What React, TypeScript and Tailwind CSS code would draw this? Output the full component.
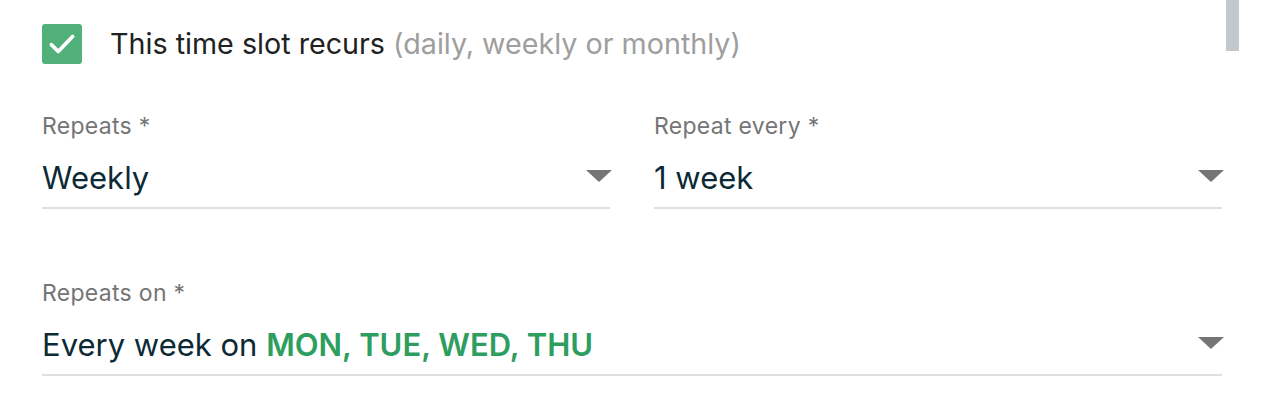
import React from "react";

const Arrow = () => (
  <svg width="26" height="12" viewBox="0 0 26 12" className="shrink-0">
    <path d="M0 0 H26 L13 12 Z" fill="#757575" />
  </svg>
);

function Field({ label, children }: { label: string; children: React.ReactNode }) {
  return (
    <div className="flex flex-col">
      <div className="text-[23px] leading-[26px] tracking-[0.3px] text-[#757575]">{label}</div>
      <div className="mt-[21px] flex items-start justify-between border-b-2 border-[#e0e0e0] pb-[11px]">
        <div className="text-[31px] leading-[36px] text-[#0c2a35]">{children}</div>
        <div className="mr-[-2px] mt-[10px]"><Arrow /></div>
      </div>
    </div>
  );
}

export default function App() {
  return (
    <div className="relative h-[418px] w-[1270px] overflow-hidden bg-white font-['Inter','Roboto',sans-serif]">
      <div className="absolute right-[31px] top-0 h-[51px] w-[13px] bg-[#c1c9cc]" />
      <div className="pl-[42px] pr-[48px] pt-[24px]">
        <div className="flex items-center">
          <div className="flex h-[40px] w-[40px] items-center justify-center rounded-[3px] bg-[#52b07a]">
            <svg width="30" height="30" viewBox="0 0 24 24" fill="none" stroke="white" strokeWidth="3" strokeLinecap="round" strokeLinejoin="round">
              <path d="M3.5 12.5 L9 18 L20.5 6" />
            </svg>
          </div>
          <div className="ml-[28px] text-[28.7px] leading-[34px] text-[#212121]">
            This time slot recurs <span className="text-[#9e9e9e]">(daily, weekly or monthly)</span>
          </div>
        </div>
        <div className="mt-[49px] grid grid-cols-2 gap-x-[44px]">
          <Field label="Repeats *">Weekly</Field>
          <Field label="Repeat every *">1 week</Field>
        </div>
        <div className="mt-[71px]">
          <Field label="Repeats on *">
            Every week on <span className="font-semibold text-[#2e9e5e]">MON, TUE, WED, THU</span>
          </Field>
        </div>
      </div>
    </div>
  );
}
